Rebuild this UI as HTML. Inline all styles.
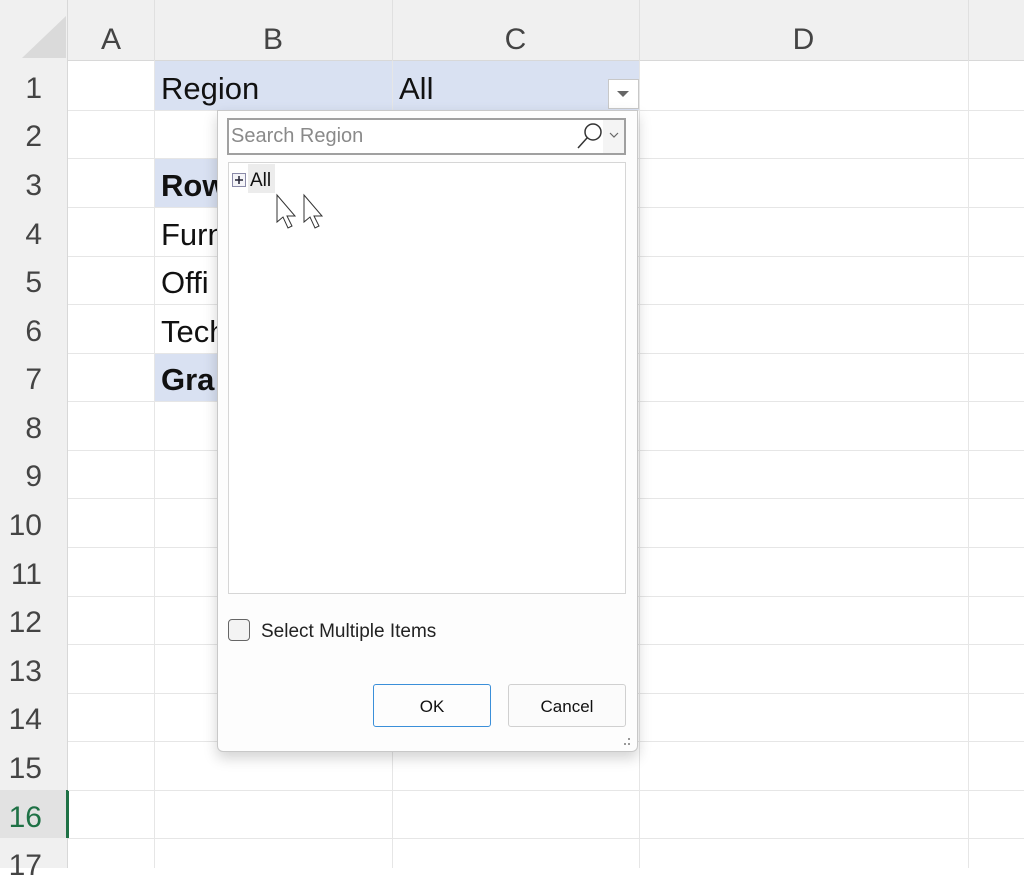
<!DOCTYPE html>
<html><head><meta charset="utf-8"><style>
*{margin:0;padding:0;box-sizing:border-box}
body{width:1024px;height:868px;overflow:hidden;background:#fff;font-family:"Liberation Sans",sans-serif;position:relative;color:#111}
.a{position:absolute}
.hl{position:absolute;height:1px;background:#e6e6e6;left:68px;width:956px}
.vl{position:absolute;width:1px;background:#e6e6e6;top:61px;height:807px}
.rh{position:absolute;left:0;width:68px;text-align:right;padding-right:26px;font-size:30px;color:#444;line-height:48px}
.ch{position:absolute;top:23px;font-size:30px;color:#444;text-align:center}
.cell{position:absolute;font-size:31px;line-height:48px;padding-left:7px}
</style></head><body>
<div class="a" style="left:0;top:0;width:1024px;height:61px;background:#f0f0f0;border-bottom:1px solid #d8d8d8"></div>
<div class="a" style="left:0;top:0;width:68px;height:868px;background:#f0f0f0;border-right:1px solid #d8d8d8"></div>
<svg class="a" style="left:22px;top:16px" width="44" height="42"><polygon points="44,0 44,42 0,42" fill="#dadada"/></svg>
<div class="a" style="left:154px;top:0;width:1px;height:61px;background:#e0e0e0"></div>
<div class="a" style="left:392px;top:0;width:1px;height:61px;background:#e0e0e0"></div>
<div class="a" style="left:639px;top:0;width:1px;height:61px;background:#e0e0e0"></div>
<div class="a" style="left:968px;top:0;width:1px;height:61px;background:#e0e0e0"></div>
<div class="ch" style="left:68px;width:86px">A</div>
<div class="ch" style="left:154px;width:238px">B</div>
<div class="ch" style="left:392px;width:247px">C</div>
<div class="ch" style="left:639px;width:329px">D</div>
<div class="a" style="left:0;top:790px;width:68px;height:48px;background:#e2e2e2"></div>
<div class="a" style="left:66px;top:790px;width:3px;height:48px;background:#1e7145"></div>
<div class="rh" style="top:65px">1</div><div class="rh" style="top:113px">2</div><div class="rh" style="top:162px">3</div><div class="rh" style="top:211px">4</div><div class="rh" style="top:259px">5</div><div class="rh" style="top:308px">6</div><div class="rh" style="top:356px">7</div><div class="rh" style="top:405px">8</div><div class="rh" style="top:453px">9</div><div class="rh" style="top:502px">10</div><div class="rh" style="top:551px">11</div><div class="rh" style="top:599px">12</div><div class="rh" style="top:648px">13</div><div class="rh" style="top:696px">14</div><div class="rh" style="top:745px">15</div><div class="rh" style="top:794px;color:#1e7145">16</div><div class="rh" style="top:842px">17</div>
<div class="a" style="left:154px;top:61px;width:485px;height:49px;background:#d9e1f2"></div>
<div class="a" style="left:154px;top:158px;width:70px;height:49px;background:#d9e1f2"></div>
<div class="a" style="left:154px;top:353px;width:70px;height:48px;background:#d9e1f2"></div>
<div class="hl" style="top:110px"></div><div class="hl" style="top:158px"></div><div class="hl" style="top:207px"></div><div class="hl" style="top:256px"></div><div class="hl" style="top:304px"></div><div class="hl" style="top:353px"></div><div class="hl" style="top:401px"></div><div class="hl" style="top:450px"></div><div class="hl" style="top:498px"></div><div class="hl" style="top:547px"></div><div class="hl" style="top:596px"></div><div class="hl" style="top:644px"></div><div class="hl" style="top:693px"></div><div class="hl" style="top:741px"></div><div class="hl" style="top:790px"></div><div class="hl" style="top:838px"></div>
<div class="vl" style="left:154px"></div><div class="vl" style="left:392px"></div><div class="vl" style="left:639px"></div><div class="vl" style="left:968px"></div>
<div class="cell" style="left:154px;top:65px">Region</div>
<div class="cell" style="left:392px;top:65px">All</div>
<div class="cell" style="left:154px;top:162px;font-weight:bold">Row</div>
<div class="cell" style="left:154px;top:211px">Furn</div>
<div class="cell" style="left:154px;top:259px">Offi</div>
<div class="cell" style="left:154px;top:308px">Tech</div>
<div class="cell" style="left:154px;top:356px;font-weight:bold">Gra</div>
<div class="a" style="left:608px;top:79px;width:31px;height:30px;background:#fff;border:1px solid #c8c8c8"></div>
<svg class="a" style="left:617px;top:91px" width="12" height="7"><polygon points="0,0 12,0 6,6" fill="#666"/></svg>
<div class="a" style="left:217px;top:110px;width:421px;height:642px;background:#fdfdfd;border:1px solid #c8c8c8;border-radius:0 0 6px 6px;box-shadow:0 6px 14px rgba(0,0,0,.18)"></div>
<div class="a" style="left:227px;top:118px;width:399px;height:37px;border:2px solid #a0a0a0;background:#fff"></div>
<div class="a" style="left:231px;top:125px;font-size:20px;color:#8a8a8a">Search Region</div>
<div class="a" style="left:603px;top:120px;width:21px;height:33px;background:#f4f4f4"></div>
<svg class="a" style="left:574px;top:120px" width="50" height="34"><circle cx="19" cy="12" r="8" fill="none" stroke="#333" stroke-width="1.5"/><line x1="13" y1="18" x2="4" y2="28" stroke="#333" stroke-width="1.5"/><polyline points="36,13 40,17 44,13" fill="none" stroke="#666" stroke-width="1.2"/></svg>
<div class="a" style="left:228px;top:162px;width:398px;height:432px;border:1px solid #d6d6d6;background:#fff"></div>
<div class="a" style="left:248px;top:164px;width:27px;height:29px;background:#ececec"></div>
<svg class="a" style="left:232px;top:173px" width="14" height="14"><rect x="0.5" y="0.5" width="13" height="13" fill="#f4f4f8" stroke="#8a8aa8"/><path d="M3 7h8M7 3v8" stroke="#223" stroke-width="1.5"/></svg>
<div class="a" style="left:250px;top:170px;font-size:19px">All</div>
<svg class="a" style="left:275px;top:193px" width="55" height="38"><path d="M2 2v27l6-5 5 11 4-2-5-10h8z" fill="#fff" stroke="#333" stroke-width="1"/><path d="M29 2v27l6-5 5 11 4-2-5-10h8z" fill="#fff" stroke="#333" stroke-width="1"/></svg>
<div class="a" style="left:228px;top:619px;width:22px;height:22px;border:1.5px solid #666;border-radius:4px;background:#f3f3f3"></div>
<div class="a" style="left:261px;top:621px;font-size:19px;color:#222">Select Multiple Items</div>
<div class="a" style="left:373px;top:684px;width:118px;height:43px;border:1px solid #3b8fd9;border-radius:3px;background:#fdfdfd;text-align:center;line-height:43px;font-size:17px">OK</div>
<div class="a" style="left:508px;top:684px;width:118px;height:43px;border:1px solid #d0d0d0;border-radius:3px;background:#fbfbfb;text-align:center;line-height:43px;font-size:17px">Cancel</div>
<svg class="a" style="left:621px;top:738px" width="12" height="10"><rect x="7" y="0" width="2" height="2" fill="#999"/><rect x="3" y="5" width="2" height="2" fill="#999"/><rect x="7" y="5" width="2" height="2" fill="#999"/></svg>
</body></html>
